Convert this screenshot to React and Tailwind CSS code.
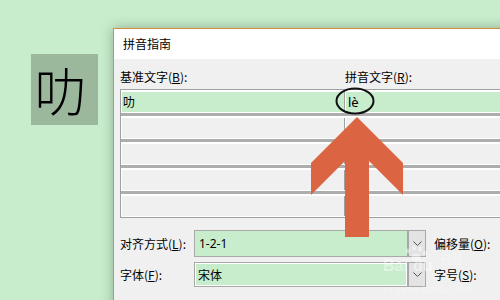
import React from "react";

const Chevron = () => (
  <svg width="9" height="5" viewBox="0 0 9 5" className="block">
    <polyline points="0.5,0.5 4.5,4.5 8.5,0.5" fill="none" stroke="#555" strokeWidth="1" />
  </svg>
);

function Row({ a, b, green }) {
  const bg = green ? "bg-[#c7edcc]" : "bg-[#f0f0f0]";
  return (
    <div className="flex h-[23px] border-t-2 border-b border-white">
      <div className={`w-[224px] shrink-0 border-l border-r border-l-white border-r-[#a0a0a0] ${bg} pl-[1px] flex items-center text-[12px] leading-none`}>
        {a}
      </div>
      <div className={`flex-1 border-l border-l-white ${bg} pl-[2px] flex items-center text-[13px] leading-none font-['Noto_Sans',sans-serif]`}>
        {b}
      </div>
    </div>
  );
}

const Sep = () => <div className="h-[3px] bg-[#adadad]" />;

export default function App() {
  return (
    <div className="relative w-[500px] h-[300px] overflow-hidden bg-[#c7edcc] flex items-start font-['Noto_Sans_CJK_SC',sans-serif] text-black">
      <div className="ml-[31px] mt-[54px] w-[67px] h-[71px] shrink-0 bg-[#9bb89d] flex items-center justify-center pr-[8px] text-[52px] leading-none font-light">
        叻
      </div>

      <div className="ml-[15px] mt-[28px] w-[420px] h-[300px] shrink-0 border-l border-t border-[#d4903c] shadow-[0_0_12px_rgba(0,0,0,0.28)] flex flex-col">
        <div className="h-[30px] bg-white flex items-center pl-[9px] text-[12px]">拼音指南</div>
        <div className="flex-1 bg-[#f0f0f0] pl-[6px] pt-[10px]">
          <div className="flex h-[16px] items-center text-[12px] leading-none">
            <div className="w-[225px] shrink-0">基准文字(<u>B</u>):</div>
            <div>拼音文字(<u>R</u>):</div>
          </div>
          <div className="mt-[4px] border-l border-t border-b border-[#a0a0a0]">
            <Row a="叻" b="lè" green />
            <Sep />
            <Row />
            <Sep />
            <Row />
            <Sep />
            <Row />
            <Sep />
            <Row />
          </div>

          <div className="mt-[12px] flex items-center text-[12px] leading-none">
            <div className="w-[74px] shrink-0">对齐方式(<u>L</u>):</div>
            <div className="w-[232px] h-[27px] shrink-0 border border-[#a8a8a8] flex">
              <div className="flex-1 bg-[#c7edcc] flex items-center pl-[4px] font-['Noto_Sans',sans-serif]">1-2-1</div>
              <div className="w-[18px] bg-[#e3e3e3] border-l-2 border-[#a8a8a8] flex items-center justify-center">
                <Chevron />
              </div>
            </div>
            <div className="ml-[8px]">偏移量(<u>O</u>):</div>
          </div>

          <div className="mt-[5px] flex items-center text-[12px] leading-none">
            <div className="w-[74px] shrink-0">字体(<u>F</u>):</div>
            <div className="w-[232px] h-[25px] shrink-0 border border-[#a8a8a8] flex">
              <div className="flex-1 border border-white bg-[#c7edcc] flex items-center pl-[2px]">宋体</div>
              <div className="w-[18px] bg-[#e3e3e3] border-l-2 border-[#a8a8a8] flex items-center justify-center">
                <Chevron />
              </div>
            </div>
            <div className="ml-[8px]">字号(<u>S</u>):</div>
          </div>
        </div>
      </div>

      <svg className="absolute left-0 top-0 pointer-events-none" width="500" height="300" viewBox="0 0 500 300">
        <ellipse cx="355" cy="101" rx="18.5" ry="12.5" fill="none" stroke="#111" strokeWidth="2" />
        <polygon
          points="357,117 403,163 403,195 369,161 369,237 345,237 345,161 311,195 311,163"
          fill="#db6443"
        />
        <g fill="#ffffff" fillOpacity="0.45">
          <ellipse cx="408" cy="251" rx="2" ry="2.5" />
          <ellipse cx="414" cy="248" rx="2" ry="2.5" />
          <ellipse cx="420" cy="249" rx="2" ry="2.5" />
          <ellipse cx="425" cy="253" rx="2" ry="2.5" />
          <ellipse cx="416" cy="257" rx="4.5" ry="3.5" />
        </g>
      </svg>

      <div className="absolute left-[383px] top-[258px] pointer-events-none text-white/45 font-['Liberation_Sans',sans-serif] text-[16px] font-bold leading-none">
        Bai<span className="ml-[5px]">du</span>
      </div>
      <div className="absolute left-[441px] top-[254px] pointer-events-none text-white/40 font-['Noto_Sans_CJK_SC',sans-serif] text-[11px] leading-[11px]">
        经验
      </div>
      <div className="absolute left-[384px] top-[285px] pointer-events-none text-white/40 font-['Liberation_Sans',sans-serif] text-[10px] leading-none tracking-[0.5px]">
        jingyan.baidu.com
      </div>
    </div>
  );
}
